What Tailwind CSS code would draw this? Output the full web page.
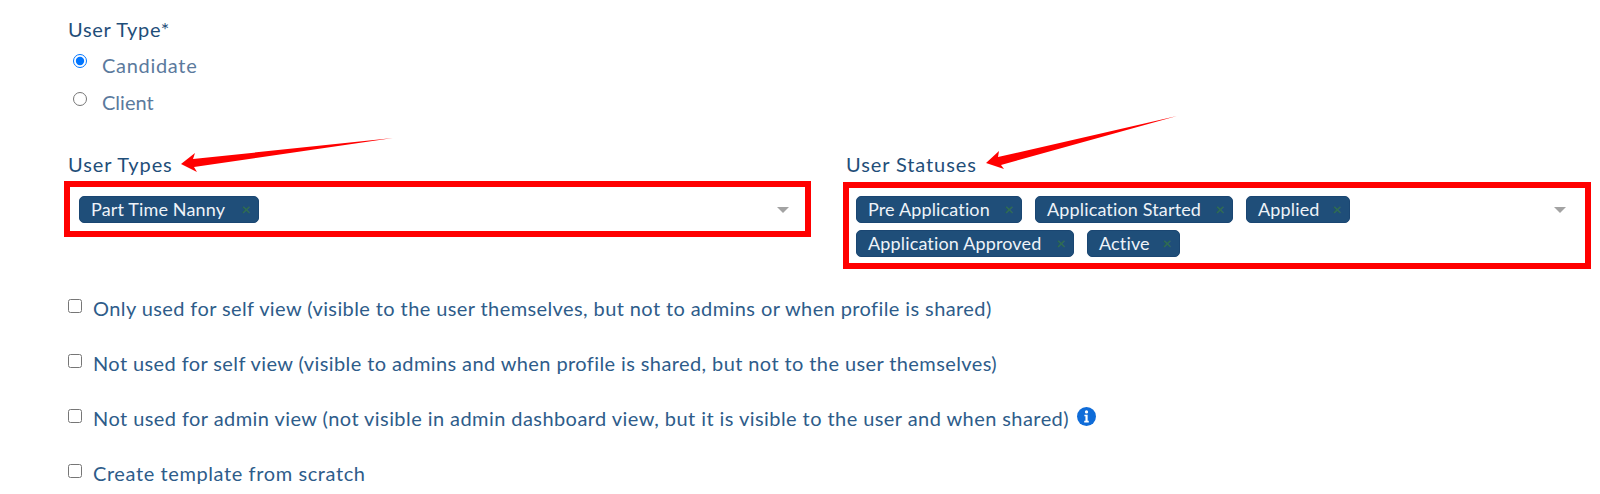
<!DOCTYPE html>
<html lang="en">
<head>
    <meta charset="UTF-8">
    <title>User Type</title>
    <script src="https://cdn.jsdelivr.net/npm/@tailwindcss/browser@4"></script>
</head>
<body class="relative h-[494px] w-[1600px] overflow-hidden bg-white font-['Lato',sans-serif] text-[20px] leading-[22px] text-[#2e5c8a]">
    <div class="pl-[64px] pt-[18px]">
        <!-- User type radios -->
        <div class="pl-[4px]">
            <p class="tracking-[0.7px] text-[#1f4e79]">User Type*</p>
            <div class="mt-[12px] flex h-[38px] items-start text-[#5b7a9d]">
                <input type="radio" name="user_type" checked class="mt-[2px] ml-[5px] h-[14px] w-[14px] accent-[#0075ff]">
                <span class="ml-[15px] mt-[2px] tracking-[0.7px]">Candidate</span>
            </div>
            <div class="flex h-[38px] items-start text-[#5b7a9d]">
                <input type="radio" name="user_type" class="mt-[2px] ml-[5px] h-[14px] w-[14px]">
                <span class="ml-[15px] mt-[1px]">Client</span>
            </div>
        </div>

        <!-- Dropdowns -->
        <div class="mt-[25px] grid grid-cols-[747px_748px] gap-x-[32px]">
            <div>
                <p class="pl-[4px] tracking-[0.9px] text-[#1f4e79]">User Types</p>
                <div class="mt-[6px] flex h-[56px] items-start justify-between border-[6px] border-[#ff0000] pl-[9px] pr-[16px] pt-[9px]">
                    <span class="flex h-[27px] w-[180px] items-center justify-between rounded-[5px] border border-[#1a4672] bg-[#1f4e79] pb-[2px] pl-[11px] pr-[7px] text-[18px] tracking-[0.15px] text-[#eef3f8]">
                        Part Time Nanny
                        <span class="text-[16px] font-bold leading-none text-[#2f6b52]">×</span>
                    </span>
                    <span class="mt-[11px] h-0 w-0 border-x-[6px] border-t-[6px] border-x-transparent border-t-[#a3a3a3]"></span>
                </div>
            </div>
            <div>
                <p class="pl-[3px] tracking-[0.9px] text-[#1f4e79]">User Statuses</p>
                <div class="mt-[7px] flex h-[87px] items-start justify-between border-[6px] border-[#ff0000] pl-[7px] pr-[19px] pt-[8px]">
                    <div class="flex w-[640px] flex-wrap gap-x-[13px] gap-y-[7px]">
                        <span class="flex h-[27px] w-[166px] items-center justify-between rounded-[5px] border border-[#1a4672] bg-[#1f4e79] pb-[2px] pl-[11px] pr-[7px] text-[18px] tracking-[0.15px] text-[#eef3f8]">
                            Pre Application
                            <span class="text-[16px] font-bold leading-none text-[#2f6b52]">×</span>
                        </span>
                        <span class="flex h-[27px] w-[198px] items-center justify-between rounded-[5px] border border-[#1a4672] bg-[#1f4e79] pb-[2px] pl-[11px] pr-[7px] text-[18px] tracking-[0.15px] text-[#eef3f8]">
                            Application Started
                            <span class="text-[16px] font-bold leading-none text-[#2f6b52]">×</span>
                        </span>
                        <span class="flex h-[27px] w-[104px] items-center justify-between rounded-[5px] border border-[#1a4672] bg-[#1f4e79] pb-[2px] pl-[11px] pr-[7px] text-[18px] tracking-[0.15px] text-[#eef3f8]">
                            Applied
                            <span class="text-[16px] font-bold leading-none text-[#2f6b52]">×</span>
                        </span>
                        <span class="flex h-[27px] w-[218px] items-center justify-between rounded-[5px] border border-[#1a4672] bg-[#1f4e79] pb-[2px] pl-[11px] pr-[7px] text-[18px] tracking-[0.15px] text-[#eef3f8]">
                            Application Approved
                            <span class="text-[16px] font-bold leading-none text-[#2f6b52]">×</span>
                        </span>
                        <span class="flex h-[27px] w-[93px] items-center justify-between rounded-[5px] border border-[#1a4672] bg-[#1f4e79] pb-[2px] pl-[11px] pr-[7px] text-[18px] tracking-[0.15px] text-[#eef3f8]">
                            Active
                            <span class="text-[16px] font-bold leading-none text-[#2f6b52]">×</span>
                        </span>
                    </div>
                    <span class="mt-[11px] h-0 w-0 border-x-[6px] border-t-[6px] border-x-transparent border-t-[#a3a3a3]"></span>
                </div>
            </div>
        </div>

        <!-- Options -->
        <div class="mt-[28px] flex flex-col gap-y-[33px] pl-[4px] tracking-[0.4px]">
            <label class="flex items-start gap-x-[11px]">
                <input type="checkbox" class="mt-[2px] h-[14px] w-[14px]">
                <span>Only used for self view (visible to the user themselves, but not to admins or when profile is shared)</span>
            </label>
            <label class="flex items-start gap-x-[11px]">
                <input type="checkbox" class="mt-[2px] h-[14px] w-[14px]">
                <span>Not used for self view (visible to admins and when profile is shared, but not to the user themselves)</span>
            </label>
            <label class="flex items-start gap-x-[11px]">
                <input type="checkbox" class="mt-[2px] h-[14px] w-[14px]">
                <span class="tracking-[0.43px]">Not used for admin view (not visible in admin dashboard view, but it is visible to the user and when shared)</span>
                <svg class="ml-[-3px] h-[19px] w-[19px]" viewBox="0 0 20 20">
                    <circle cx="10" cy="10" r="10" fill="#0f6cd8"/>
                    <circle cx="10" cy="5.2" r="1.7" fill="#fff"/>
                    <path d="M7.8 8.2h3.4v6.4h1.2v1.6H7.6v-1.6h1.3V9.8H7.8z" fill="#fff"/>
                </svg>
            </label>
            <label class="flex items-start gap-x-[11px]">
                <input type="checkbox" class="mt-[2px] h-[14px] w-[14px]">
                <span class="tracking-[0.6px]">Create template from scratch</span>
            </label>
        </div>
    </div>

    <!-- Red annotation arrows -->
    <svg class="absolute left-0 top-0 h-[494px] w-[1600px]" viewBox="0 0 1600 494">
        <polygon fill="#ff0000" points="181,164 195,153 193,159 393,138 194,167 197,172"/>
        <polygon fill="#ff0000" points="986,163 999,151 998,157 1177,116 1001,165 1004,169"/>
    </svg>
</body>
</html>
